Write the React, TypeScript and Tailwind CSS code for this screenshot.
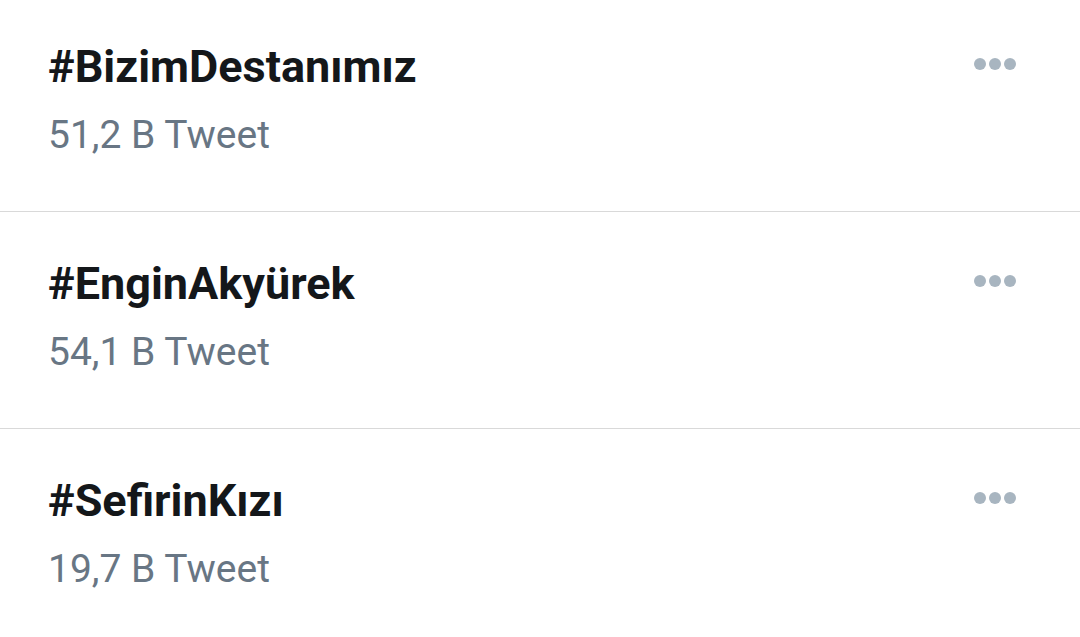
import React from "react";

const trends = [
  { tag: "#BizimDestanımız", count: "51,2 B Tweet" },
  { tag: "#EnginAkyürek", count: "54,1 B Tweet" },
  { tag: "#SefirinKızı", count: "19,7 B Tweet" },
];

const Dots = () => (
  <div className="flex gap-[3px]">
    <span className="w-[12px] h-[12px] rounded-full bg-[#a8b5c0]" />
    <span className="w-[12px] h-[12px] rounded-full bg-[#a8b5c0]" />
    <span className="w-[12px] h-[12px] rounded-full bg-[#a8b5c0]" />
  </div>
);

const App = () => {
  return (
    <div className="w-[1080px] h-[637px] overflow-hidden bg-white font-['Roboto',sans-serif]">
      <div className="-mt-[5px]">
        {trends.map((t, i) => (
          <div
            key={t.tag}
            className={
              i < trends.length - 1
                ? "h-[217px] border-b-[1.5px] border-[#d9d9d9] flex justify-between items-start pl-[48px] pr-[64px] pt-[44px]"
                : "h-[217px] flex justify-between items-start pl-[48px] pr-[64px] pt-[44px]"
            }
          >
            <div>
              <h4 className="text-[45px] leading-[56px] font-bold text-[#14171a]">
                {t.tag}
              </h4>
              <p className="text-[39px] leading-[50px] mt-[15px] text-[#687684]">
                {t.count}
              </p>
            </div>
            <div className="pt-[19px]">
              <Dots />
            </div>
          </div>
        ))}
      </div>
    </div>
  );
};

export default App;
